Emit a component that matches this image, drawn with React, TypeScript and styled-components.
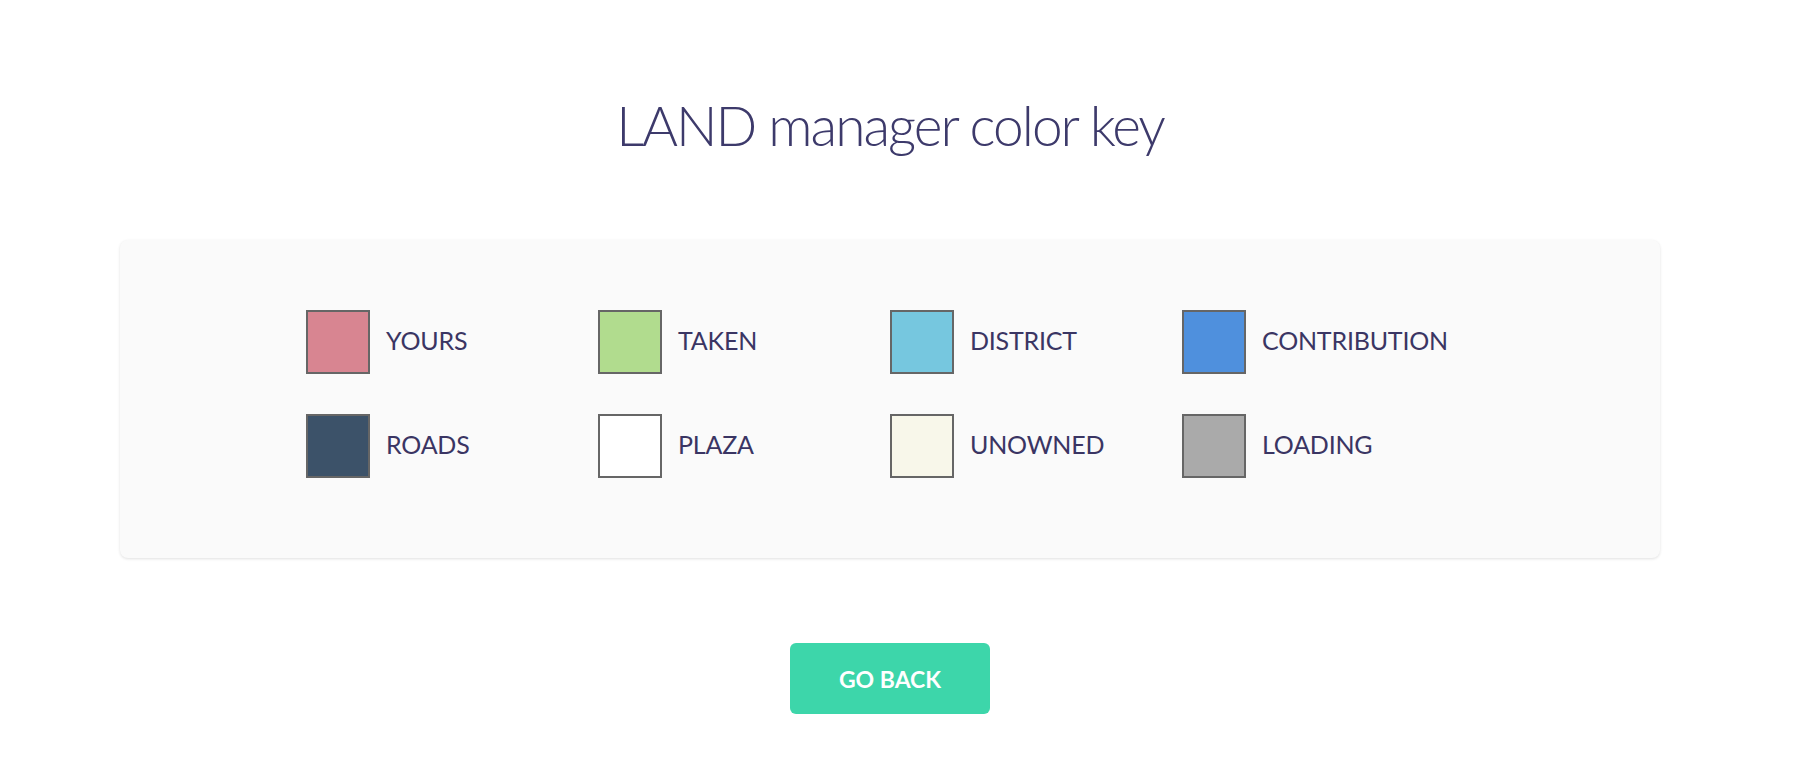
import React from "react";
import styled, { createGlobalStyle } from "styled-components";

const Global = createGlobalStyle`
  html, body { margin: 0; padding: 0; background: #ffffff; }
  body { font-family: Lato, "Open Sans", sans-serif; }
`;

const Page = styled.div`
  width: 1818px;
  height: 782px;
  box-sizing: border-box;
  padding: 0 158px 0 120px;
  display: flex;
  flex-direction: column;
  align-items: center;
`;

const Title = styled.h1`
  margin: 92px 0 0;
  font-family: Lato, sans-serif;
  font-weight: 300;
  font-size: 55px;
  line-height: 66px;
  letter-spacing: -2px;
  color: #3d3a6b;
  text-align: center;
`;

const Card = styled.section`
  margin-top: 82px;
  align-self: stretch;
  background: #fafafa;
  border-radius: 8px;
  box-shadow: 0 1px 3px rgba(0, 0, 0, 0.12);
  padding: 70px 0 40px;
  display: flex;
  justify-content: center;
`;

const Grid = styled.div`
  display: grid;
  grid-template-columns: repeat(4, 292px);
`;

const Item = styled.div`
  display: flex;
  align-items: center;
  gap: 16px;
  margin-bottom: 40px;
`;

const Swatch = styled.div<{ $color: string }>`
  width: 64px;
  height: 64px;
  box-sizing: border-box;
  border: 2px solid #666666;
  background: ${(p) => p.$color};
`;

const Label = styled.span`
  font-family: Lato, sans-serif;
  font-size: 25px;
  font-weight: 400;
  letter-spacing: -0.2px;
  line-height: 30px;
  padding-bottom: 4px;
  color: #3a3563;
`;

const Button = styled.button`
  margin-top: 85px;
  width: 200px;
  height: 71px;
  border: none;
  border-radius: 6px;
  background: #3dd6aa;
  color: #ffffff;
  font-family: Lato, sans-serif;
  font-weight: 700;
  font-size: 23px;
  cursor: pointer;
`;

const items: [string, string][] = [
  ["YOURS", "#d88591"],
  ["TAKEN", "#b1dc8e"],
  ["DISTRICT", "#76c7df"],
  ["CONTRIBUTION", "#4f90dd"],
  ["ROADS", "#3c5269"],
  ["PLAZA", "#ffffff"],
  ["UNOWNED", "#f8f7ea"],
  ["LOADING", "#aaaaaa"],
];

export default function App() {
  return (
    <>
      <Global />
      <Page>
        <Title>LAND manager color key</Title>
        <Card>
          <Grid>
            {items.map(([name, color]) => (
              <Item key={name}>
                <Swatch $color={color} />
                <Label>{name}</Label>
              </Item>
            ))}
          </Grid>
        </Card>
        <Button>GO BACK</Button>
      </Page>
    </>
  );
}
